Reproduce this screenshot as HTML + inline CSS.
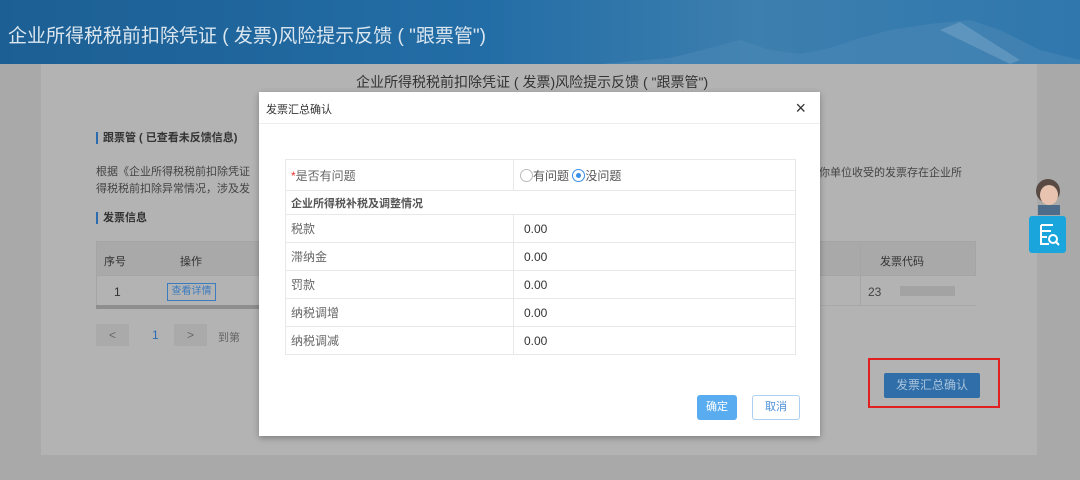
<!DOCTYPE html>
<html><head><meta charset="utf-8"><style>
*{margin:0;padding:0;box-sizing:border-box}
body{width:1080px;height:480px;overflow:hidden;background:#a9a9a9;font-family:"Liberation Sans","Noto Sans CJK SC",sans-serif;position:relative;font-size:12px;color:#555}
.hdr{position:absolute;left:0;top:0;width:1080px;height:64px;background:linear-gradient(90deg,#1c5f94 0%,#236da6 45%,#3d7fae 70%,#2f77ad 100%);}
.hdr h1{position:absolute;left:8px;top:21px;font-size:19px;font-weight:normal;color:#dbe6ef;letter-spacing:0}
.panel{position:absolute;left:41px;top:64px;width:996px;height:391px;background:#b3b3b3}
.a{position:absolute;white-space:nowrap}
.modal{position:absolute;left:259px;top:92px;width:561px;height:344px;background:#fff;box-shadow:0 2px 6px rgba(0,0,0,.3)}
table{border-collapse:collapse;position:absolute;left:26px;top:67px;width:511px}
td{border:1px solid #e8e8e8;height:28px;padding-left:5px;font-size:12px;color:#666}
td.v{color:#333;padding-left:10px}
.btn{position:absolute;height:25px;border-radius:3px;font-size:12px;text-align:center;line-height:25px}
</style></head><body>
<div class="hdr"><h1>企业所得税税前扣除凭证 ( 发票)风险提示反馈 ( "跟票管")</h1>
<svg style="position:absolute;left:600px;top:10px" width="480" height="54"><path d="M0 54 L70 48 L110 38 L140 30 L170 40 L200 44 L230 38 L260 28 L290 20 L330 14 L370 10 L400 20 L440 40 L480 50 L480 54Z" fill="#4a87b5" opacity=".6"/><path d="M340 20 L360 12 L420 50 L410 54Z" fill="#7aa8c9" opacity=".5"/></svg></div>
<div class="panel"></div>
<div class="a" style="left:356px;top:72px;font-size:14px;color:#333">企业所得税税前扣除凭证 ( 发票)风险提示反馈 ( "跟票管")</div>
<div class="a" style="left:96px;top:132px;border-left:2px solid #2b6cb0;padding-left:5px;font-weight:bold;color:#333;font-size:11px;line-height:12px">跟票管 ( 已查看未反馈信息)</div>
<div class="a" style="left:96px;top:164px;color:#444;font-size:11px;line-height:17px">根据《企业所得税税前扣除凭证<br>得税税前扣除异常情况，涉及发</div>
<div class="a" style="left:808px;top:164px;color:#444;font-size:11px">期你单位收受的发票存在企业所</div>
<div class="a" style="left:96px;top:212px;border-left:2px solid #2b6cb0;padding-left:5px;font-weight:bold;color:#333;font-size:11px;line-height:12px">发票信息</div>
<div class="a" style="left:96px;top:241px;width:164px;height:35px;background:#a9a9a9;border:1px solid #a5a5a5"></div>
<div class="a" style="left:104px;top:253px;color:#333;font-size:11px">序号</div>
<div class="a" style="left:180px;top:253px;color:#333;font-size:11px">操作</div>
<div class="a" style="left:96px;top:276px;width:164px;height:30px;border-left:1px solid #a5a5a5"></div>
<div class="a" style="left:114px;top:285px;color:#333">1</div>
<div class="a" style="left:167px;top:283px;width:49px;height:18px;border:1px solid #3b7bc0;color:#3b7bc0;font-size:10px;text-align:center;line-height:16px">查看详情</div>
<div class="a" style="left:96px;top:305px;width:164px;height:4px;background:#8e8e8e"></div>
<div class="a" style="left:96px;top:324px;width:33px;height:22px;background:#aaa;text-align:center;line-height:22px;color:#666">&lt;</div>
<div class="a" style="left:152px;top:328px;color:#2b6cb0">1</div>
<div class="a" style="left:174px;top:324px;width:33px;height:22px;background:#aaa;text-align:center;line-height:22px;color:#666">&gt;</div>
<div class="a" style="left:218px;top:329px;color:#666;font-size:11px">到第</div>
<div class="a" style="left:820px;top:241px;width:156px;height:35px;background:#a9a9a9;border:1px solid #a5a5a5;border-left:none"></div>
<div class="a" style="left:860px;top:241px;width:1px;height:65px;background:#a5a5a5"></div>
<div class="a" style="left:880px;top:253px;color:#333;font-size:11px">发票代码</div>
<div class="a" style="left:820px;top:305px;width:156px;height:1px;background:#a8a8a8"></div>
<div class="a" style="left:868px;top:285px;color:#444">23</div>
<div class="a" style="left:900px;top:286px;width:55px;height:10px;background:#a3a3a3"></div>
<div class="a" style="left:868px;top:358px;width:132px;height:50px;border:2px solid #e02020"></div>
<div class="btn" style="left:884px;top:373px;width:96px;background:#2f6ea8;color:#a9c3dc;border-radius:2px">发票汇总确认</div>
<svg class="a" style="left:1030px;top:175px" width="36" height="40"><circle cx="18" cy="16" r="12" fill="#5a4a44"/><ellipse cx="19" cy="20" rx="9" ry="10" fill="#e8c4b0"/><rect x="8" y="30" width="22" height="10" fill="#4d6c8a"/></svg>
<div class="a" style="left:1029px;top:216px;width:37px;height:37px;background:#1aa6dc;border-radius:3px"><svg width="37" height="37"><path d="M12 9 H24 M12 9 V28 H20 M12 15 H22 M12 21 H18" stroke="#fff" stroke-width="2" fill="none"/><circle cx="24" cy="23" r="4" stroke="#fff" stroke-width="2" fill="none"/><path d="M27 26 L30 29" stroke="#fff" stroke-width="2"/></svg></div>
<div class="modal">
<div style="height:32px;border-bottom:1px solid #eee;padding:9px 0 0 7px;font-size:11px;color:#333">发票汇总确认</div>
<div class="a" style="right:14px;top:6px;font-size:18px;color:#333">×</div>
<table>
<tr><td style="width:228px;height:31px"><span style="color:#e33">*</span>是否有问题</td><td class="v" style="color:#555;padding-left:6px"><span style="display:inline-block;width:13px;height:13px;border:1px solid #bbb;border-radius:50%;vertical-align:-2px"></span>有问题 <span style="display:inline-block;width:13px;height:13px;border:1px solid #3a8ee6;border-radius:50%;vertical-align:-2px;position:relative"><span style="position:absolute;left:3px;top:3px;width:5px;height:5px;background:#3a8ee6;border-radius:50%"></span></span>没问题</td></tr>
<tr><td colspan="2" style="height:24px;font-weight:bold;color:#555;font-size:11px">企业所得税补税及调整情况</td></tr>
<tr><td>税款</td><td class="v">0.00</td></tr>
<tr><td>滞纳金</td><td class="v">0.00</td></tr>
<tr><td>罚款</td><td class="v">0.00</td></tr>
<tr><td>纳税调增</td><td class="v">0.00</td></tr>
<tr><td>纳税调减</td><td class="v">0.00</td></tr>
</table>
<div class="btn" style="left:438px;top:303px;width:40px;background:#5aacf0;color:#fff;font-size:11px">确定</div>
<div class="btn" style="left:493px;top:303px;width:48px;border:1px solid #aed0f0;color:#4a90d8;font-size:11px;line-height:23px">取消</div>
</div>
</body></html>
